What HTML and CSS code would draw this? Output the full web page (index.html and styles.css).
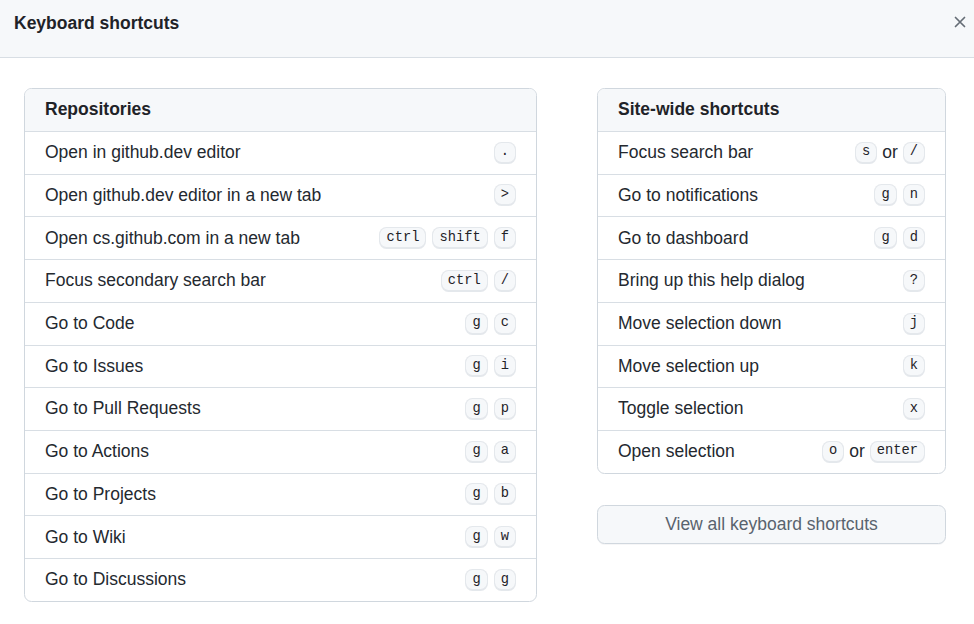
FILE: index.html
```html
<!DOCTYPE html>
<html lang="en">
<head>
<meta charset="utf-8">
<title>Keyboard shortcuts</title>
<link rel="stylesheet" href="styles.css">
</head>
<body>
<div class="dialog">
  <header class="dialog-header">
    <h1 class="dialog-title">Keyboard shortcuts</h1>
    <button class="close-btn" aria-label="Close">
      <svg width="16" height="16" viewBox="0 0 16 16"><path d="M3.5 3.5l9 9M12.5 3.5l-9 9" stroke="#656d76" stroke-width="1.7" stroke-linecap="round" fill="none"/></svg>
    </button>
  </header>
  <div class="dialog-body">
    <section class="box">
      <div class="box-header">Repositories</div>
      <div class="row"><span>Open in github.dev editor</span><span class="keys"><kbd>.</kbd></span></div>
      <div class="row"><span>Open github.dev editor in a new tab</span><span class="keys"><kbd>&gt;</kbd></span></div>
      <div class="row"><span>Open cs.github.com in a new tab</span><span class="keys"><kbd>ctrl</kbd><kbd>shift</kbd><kbd>f</kbd></span></div>
      <div class="row"><span>Focus secondary search bar</span><span class="keys"><kbd>ctrl</kbd><kbd>/</kbd></span></div>
      <div class="row"><span>Go to Code</span><span class="keys"><kbd>g</kbd><kbd>c</kbd></span></div>
      <div class="row"><span>Go to Issues</span><span class="keys"><kbd>g</kbd><kbd>i</kbd></span></div>
      <div class="row"><span>Go to Pull Requests</span><span class="keys"><kbd>g</kbd><kbd>p</kbd></span></div>
      <div class="row"><span>Go to Actions</span><span class="keys"><kbd>g</kbd><kbd>a</kbd></span></div>
      <div class="row"><span>Go to Projects</span><span class="keys"><kbd>g</kbd><kbd>b</kbd></span></div>
      <div class="row"><span>Go to Wiki</span><span class="keys"><kbd>g</kbd><kbd>w</kbd></span></div>
      <div class="row"><span>Go to Discussions</span><span class="keys"><kbd>g</kbd><kbd>g</kbd></span></div>
    </section>
    <div class="side">
      <section class="box">
        <div class="box-header">Site-wide shortcuts</div>
        <div class="row"><span>Focus search bar</span><span class="keys"><kbd>s</kbd><span class="or">or</span><kbd>/</kbd></span></div>
        <div class="row"><span>Go to notifications</span><span class="keys"><kbd>g</kbd><kbd>n</kbd></span></div>
        <div class="row"><span>Go to dashboard</span><span class="keys"><kbd>g</kbd><kbd>d</kbd></span></div>
        <div class="row"><span>Bring up this help dialog</span><span class="keys"><kbd>?</kbd></span></div>
        <div class="row"><span>Move selection down</span><span class="keys"><kbd>j</kbd></span></div>
        <div class="row"><span>Move selection up</span><span class="keys"><kbd>k</kbd></span></div>
        <div class="row"><span>Toggle selection</span><span class="keys"><kbd>x</kbd></span></div>
        <div class="row"><span>Open selection</span><span class="keys"><kbd>o</kbd><span class="or">or</span><kbd>enter</kbd></span></div>
      </section>
      <button class="view-all">View all keyboard shortcuts</button>
    </div>
  </div>
</div>
</body>
</html>
```
FILE: styles.css
```css
* { box-sizing: border-box; }
html, body { margin: 0; padding: 0; background: #ffffff; }
body {
  font-family: "Liberation Sans", Arial, sans-serif;
  font-size: 17.5px;
  color: #24292f;
}
.dialog { width: 974px; }
.dialog-header {
  height: 58px;
  background: #f6f8fa;
  border-bottom: 1px solid #d8dee4;
  display: flex;
  align-items: flex-start;
  justify-content: space-between;
  padding: 11px 6px 0 14px;
}
.dialog-title {
  margin: 0;
  font-size: 17.5px;
  font-weight: 700;
  line-height: 25px;
  color: #1f2328;
}
.close-btn {
  border: 0;
  background: transparent;
  padding: 0;
  margin-top: 3px;
  width: 16px;
  height: 16px;
  display: flex;
}
.dialog-body {
  display: grid;
  grid-template-columns: 513px 349px;
  column-gap: 60px;
  align-items: start;
  padding: 30px 0 0 24px;
}
.box {
  border: 1px solid #d0d7de;
  border-radius: 7.5px;
  overflow: hidden;
}
.box-header {
  background: #f6f8fa;
  font-weight: 700;
  line-height: 26.25px;
  padding: 6.6px 20px 9.14px;
  color: #1f2328;
}
.row {
  display: flex;
  align-items: center;
  justify-content: space-between;
  border-top: 1px solid #d8dee4;
  line-height: 26.25px;
  padding: 7.1px 20px 8.38px;
}
.keys {
  display: flex;
  align-items: center;
  gap: 6px;
  margin-top: 1px;
  line-height: 22px;
}
.or { margin: 0 -1px; position: relative; top: -1px; }
kbd {
  display: inline-block;
  font-family: "Liberation Mono", "DejaVu Sans Mono", monospace;
  font-size: 13.75px;
  line-height: 12.5px;
  padding: 3.75px 6px;
  color: #1f2328;
  background: #f6f8fa;
  border: 1px solid rgba(175, 184, 194, 0.25);
  border-radius: 7.5px;
  box-shadow: inset 0 -1px 0 rgba(175, 184, 194, 0.25);
}
.side {
  display: flex;
  flex-direction: column;
  gap: 31px;
}
.view-all {
  font-family: "Liberation Sans", Arial, sans-serif;
  font-size: 17.5px;
  line-height: 26.25px;
  padding: 5.4px 20px;
  color: #59636e;
  background: #f6f8fa;
  border: 1px solid #d0d7de;
  border-radius: 7.5px;
  box-shadow: 0 1px 0 rgba(31, 35, 40, 0.04);
  text-align: center;
}
```
